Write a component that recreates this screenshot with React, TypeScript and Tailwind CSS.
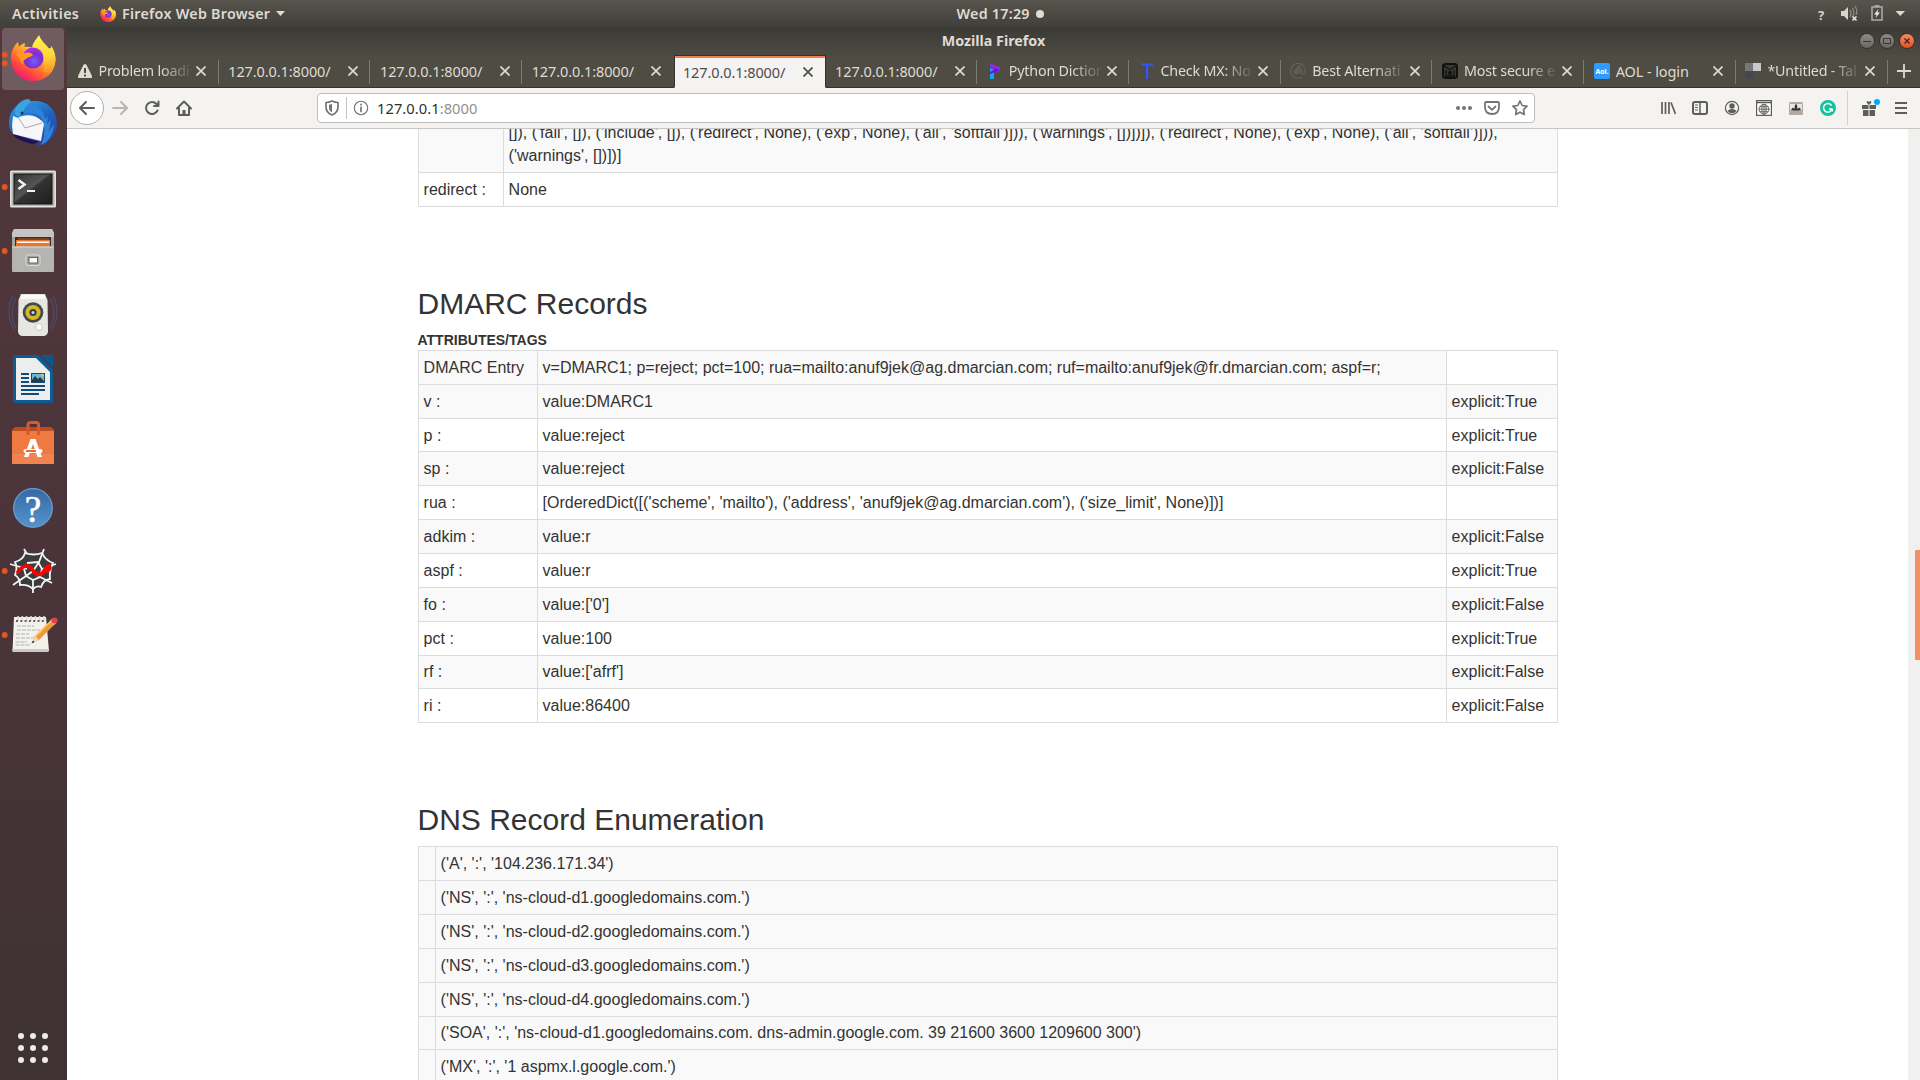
import React from "react";

const ui = "font-['Noto_Sans',sans-serif]";

function FirefoxLogo({ id }: { id: string }) {
  return (
    <>
      <defs>
        <linearGradient id={id + "a"} x1="0.85" y1="0.1" x2="0.2" y2="0.95">
          <stop offset="0" stopColor="#fff44f" />
          <stop offset="0.3" stopColor="#ffc130" />
          <stop offset="0.55" stopColor="#ff7a2a" />
          <stop offset="0.8" stopColor="#ff3b47" />
          <stop offset="1" stopColor="#f0128a" />
        </linearGradient>
        <radialGradient id={id + "b"} cx="0.55" cy="0.65" r="0.6">
          <stop offset="0" stopColor="#7b5cf5" />
          <stop offset="0.6" stopColor="#7a2fd0" />
          <stop offset="1" stopColor="#a733e0" />
        </radialGradient>
        <linearGradient id={id + "c"} x1="0.5" y1="0" x2="0.6" y2="1">
          <stop offset="0" stopColor="#fff44f" />
          <stop offset="0.6" stopColor="#ffd43a" />
          <stop offset="1" stopColor="#ff8f25" />
        </linearGradient>
      </defs>
      <path
        d="M11 57C11 51 14 46 17 43L18 42L19 47C20 45 22 44 25 43L24.500 47C28 46 32 47 36 50L52 48C55 52 55.500 56 55.500 60C55 72 46 81 33.500 81C20 81 11 71 11 57Z"
        fill={"url(#" + id + "a)"}
      />
      <path
        d="M32 49C32 43 36 40 39 35C41 40 44 43 47 46L50 50L51.500 46C55 52 56 58 55 63C53 70 49 73 43 72C46 66 44 56 39 51Z"
        fill={"url(#" + id + "c)"}
      />
      <circle cx="33" cy="58" r="10.500" fill={"url(#" + id + "b)"} />
      <path
        d="M16 54C20 52 24 54 26 53C29 52 32 53 33 55C31 57 28 57 26 59C23 60 23 62 24 65C20 63 20 57 16 54Z"
        fill="#ff9a1f"
      />
    </>
  );
}

function DockIcon({ y, running = 0, active = false, children }: { y: number; running?: number; active?: boolean; children: React.ReactNode }) {
  return (
    <svg className="block h-16 w-[67px] shrink-0" viewBox={"0 " + (y - 32) + " 67 64"}>
      {active && <rect x="2" y={y - 31} width="62" height="62" rx="4" fill="#705c60" />}
      {running === 1 && <circle cx="4.700" cy={y} r="2.900" fill="#e95420" />}
      {running === 2 && (
        <>
          <circle cx="4.700" cy={y - 4.3} r="2.900" fill="#e95420" />
          <circle cx="4.700" cy={y + 4.3} r="2.900" fill="#e95420" />
        </>
      )}
      {children}
    </svg>
  );
}

function Dock() {
  return (
    <aside className="flex w-[67px] shrink-0 flex-col justify-between bg-linear-to-b from-[#52383c] via-[#4a343a] to-[#3e3233]">
      <div className="flex flex-col">
        <DockIcon y={59} running={2} active>
          <FirefoxLogo id="dock" />
        </DockIcon>
        <DockIcon y={123}>
          <defs>
            <linearGradient id="tb" x1="0.2" y1="0" x2="0.7" y2="1">
              <stop offset="0" stopColor="#2a9be6" />
              <stop offset="0.5" stopColor="#1d62c0" />
              <stop offset="1" stopColor="#2f3f9b" />
            </linearGradient>
          </defs>
          <path d="M9 124C9 108 20 100 35 101C49 101 57 111 57 124C56 134 52 142 40 146L37 145L39 142L14 135C11 132 9 129 9 124Z" fill="url(#tb)" />
          <path d="M12 133L22 137L39 142L33 144C23 142 15 139 12 133Z" fill="#23104f" />
          <path d="M28 105C37 105 44 110 45 119L48 116L47 124L51 120L49 131L54 124C53 136 48 142 41 145C45 137 46 125 41 118C37 113 31 112 25 113Z" fill="#2f83d6" />
          <path d="M13 116L18 118C24 114 35 114 42 121L44 124L41 141L13 134L12 126Z" fill="#f6f6f8" />
          <path d="M18 117L25 128L42 123" fill="none" stroke="#a9abb2" strokeWidth="1" />
          <path d="M15 110C17 103 23 99 29 99L31 102C25 105 25 111 19 117C15 115 14 113 15 110Z" fill="#3aa3e0" />
          <circle cx="22" cy="113" r="1.500" fill="#173461" />
        </DockIcon>
        <DockIcon y={187} running={1}>
          <defs>
            <linearGradient id="tm" x1="0" y1="0" x2="1" y2="1">
              <stop offset="0" stopColor="#333" />
              <stop offset="0.45" stopColor="#555" />
              <stop offset="0.5" stopColor="#333" />
              <stop offset="1" stopColor="#1e1e1e" />
            </linearGradient>
          </defs>
          <rect x="10" y="170.500" width="46" height="37" rx="1.500" fill="#e2e2e0" />
          <rect x="11.500" y="172" width="43" height="34" fill="#b6b6b4" />
          <rect x="14" y="174" width="38" height="30" fill="url(#tm)" stroke="#111" />
          <path d="M18.500 180L24.500 184.500L18.500 189" fill="none" stroke="#f2f2f2" strokeWidth="2.600" />
          <path d="M27 191H35" stroke="#f2f2f2" strokeWidth="2" />
        </DockIcon>
        <DockIcon y={251} running={1}>
          <path d="M14 229H52L54 233V268H12V233Z" fill="#a5a5a2" />
          <path d="M14 229H52L54 233V237H12V233Z" fill="#c4c4c2" />
          <rect x="15" y="237" width="36" height="10" fill="#35302d" />
          <rect x="18" y="238" width="31" height="9" fill="#7b4424" />
          <rect x="16" y="240" width="34" height="7" fill="#e9752d" />
          <rect x="17" y="241.500" width="32" height="1.500" fill="#fff" />
          <rect x="12" y="246.500" width="42" height="25.500" rx="1" fill="#b4b4b2" />
          <path d="M12.500 247H53.500" stroke="#dadad8" />
          <rect x="26" y="255" width="14" height="10.500" rx="2" fill="#a2a2a0" stroke="#dededc" />
          <rect x="29" y="257.500" width="8.500" height="5.500" fill="#fafafa" stroke="#666" />
        </DockIcon>
        <DockIcon y={315}>
          <g fill="none" stroke="#4c5580" strokeWidth="1.200" opacity="0.700">
            <path d="M16 298C11 307 11 319 16 328M13 296C7 306 8 320 14 330M10.500 303C8.500 309 8.500 315 10.500 321M50 298C55 307 55 319 50 328M53 296C59 306 58 320 52 330M55.500 303C57.500 309 57.500 315 55.500 321" />
          </g>
          <path d="M21 294H45L47.500 300L48 331C48 334 46 336 43 336H23C20 336 18 334 18 331L18.500 300Z" fill="#e6e6e3" />
          <path d="M21 295H45V299H21Z" fill="#fafafa" />
          <circle cx="33" cy="312.500" r="10.300" fill="#45484a" />
          <circle cx="33" cy="312.500" r="7.600" fill="#d3b82a" />
          <circle cx="33" cy="312.500" r="3.600" fill="#3b3f44" />
          <circle cx="33" cy="312.500" r="1.500" fill="#cfd3d8" />
          <circle cx="39" cy="327" r="3.500" fill="#fafafa" stroke="#bbb" strokeWidth="0.700" />
        </DockIcon>
        <DockIcon y={379}>
          <path d="M13 357Q13 355 15 355H38L53 370V401Q53 403 51 403H15Q13 403 13 401Z" fill="#0e5c93" />
          <path d="M40 355H53V368Z" fill="#0b568d" />
          <path d="M16 358H36L50 372V400H16Z" fill="#eceeee" />
          <g fill="#0f4c78">
            <rect x="21" y="373" width="8" height="2" />
            <rect x="21" y="377" width="8" height="2" />
            <rect x="21" y="381" width="8" height="2" />
            <rect x="21" y="385" width="24" height="2" />
            <rect x="21" y="389" width="24" height="2" />
            <rect x="21" y="393" width="18" height="2" />
            <rect x="31" y="373" width="14" height="10" />
          </g>
          <rect x="32" y="374" width="12" height="8" fill="#6db7de" />
          <path d="M32 382V380L35 376L38 379L40 377L44 381V382Z" fill="#303a3c" />
          <circle cx="42.500" cy="375" r="1.500" fill="#f2c31b" />
        </DockIcon>
        <DockIcon y={443}>
          <path d="M12 430L15 427H51L54 430V464H12Z" fill="#bf4b20" />
          <rect x="12" y="431" width="42" height="33" fill="#ee7a42" />
          <rect x="12" y="454" width="42" height="10" fill="#f08350" />
          <path d="M28 435V425Q28 422.500 31 422.500H36Q38.500 422.500 38.500 425V435" fill="none" stroke="#d75a2b" strokeWidth="3" />
          <path d="M30.500 439H35.500L42 457H37.500L33 444L28.500 457H24Z" fill="#fff" />
          <rect x="23.500" y="449" width="19" height="4" rx="2" fill="#fff" />
          <rect x="26" y="450" width="10" height="2" fill="#ee6a2f" />
        </DockIcon>
        <DockIcon y={507}>
          <defs>
            <linearGradient id="hp" x1="0" y1="0" x2="0" y2="1">
              <stop offset="0" stopColor="#3568a4" />
              <stop offset="1" stopColor="#5495cc" />
            </linearGradient>
          </defs>
          <circle cx="33" cy="508" r="19.300" fill="url(#hp)" stroke="#6a9ccb" strokeWidth="1.300" />
          <text x="33" y="521.500" textAnchor="middle" fontSize="37" fill="#fff" fontFamily="'Liberation Serif', serif" stroke="#fff" strokeWidth="0.600">?</text>
        </DockIcon>
        <DockIcon y={571} running={1}>
          <path d="M25 552L42 552L53 563L51 578L44 586L33 590L20 584L14 575L15 561Z" fill="#3b3b3b" />
          <g fill="none" stroke="#f4f4f4" strokeWidth="1.800">
            <path d="M25 553Q34 556 42 553Q45 560 53 563Q49 571 50 579Q43 580 41 587Q37 585 33 589Q28 584 20 585Q20 578 15 575Q18 568 15 562Q23 560 25 553Z" />
            <path d="M24 549L27 554M44 549L39 562L33 571M10 564L27 569M56 564L42 569M13 585L26 576M52 583L40 577M33 580V593M33 571L40 577M33 571L26 576" />
            <path d="M27 563L38 562L42 569L40 577L33 580L26 576L24 569" />
          </g>
          <path d="M17 573C23 565 28 564 32 569C36 576 41 576 44 571C46 568 49 568 50 567" fill="none" stroke="#f00" strokeWidth="3.600" />
          <ellipse cx="47.500" cy="568.500" rx="4.500" ry="3.500" transform="rotate(-40 47.500 568.500)" fill="#f00" />
        </DockIcon>
        <DockIcon y={635} running={1}>
          <path d="M14 617H46L49 651H12.500Z" fill="#f1f1ee" />
          <path d="M12.500 649H48.500V652H12.500Z" fill="#c9c9c5" />
          <g fill="none" stroke="#d9d9d6" strokeWidth="1.600">
            <path d="M18 621V616M22.300 621V616M26.600 621V616M31 621V616M35.300 621V616M39.600 621V616M44 621V616" />
          </g>
          <path d="M16 621H46" stroke="#3a3333" strokeWidth="1.500" strokeDasharray="2 2.300" />
          <path d="M17 626H34M17 630H40M16 634H29M16 638H34M15.500 642H27M15.500 645H30" stroke="#b3b3b0" strokeWidth="1.200" strokeDasharray="4 1" />
          <path d="M32 643L35 636L51 620L55 624L39 640Z" fill="#f09a35" />
          <path d="M34 638L51 621" stroke="#ffc878" strokeWidth="1.300" />
          <path d="M31.500 643.500L35 636L39 640Z" fill="#ecd8b8" />
          <path d="M31.500 643.500L33 640.500L34.500 642Z" fill="#222" />
          <path d="M50 621L52 618.500L56.500 623L54 625Z" fill="#b9c0c6" />
          <circle cx="54.500" cy="620.500" r="3" fill="#e0444a" />
        </DockIcon>
      </div>
      <svg className="block h-16 w-[67px]" viewBox="0 1016 67 64">
        {[1036, 1048, 1060].map((y) => [21, 33, 45].map((x) => <circle key={x + "-" + y} cx={x} cy={y} r="3" fill="#eeecea" />))}
      </svg>
    </aside>
  );
}

function TopBar() {
  return (
    <header className={"grid h-[27px] shrink-0 grid-cols-[1fr_auto_1fr] items-center bg-linear-to-b from-[#58554d] to-[#403f3a] text-[14px] text-[#dfdbd2] " + ui}>
      <div className="flex h-full items-center">
        <span className="ml-3 w-[68px] text-[14.300px] font-semibold tracking-[0.350px]">Activities</span>
        <svg className="ml-5 size-4" viewBox="10 35 46 46">
          <FirefoxLogo id="top" />
        </svg>
        <span className="ml-[6px] w-[149px] text-[14.300px] font-semibold whitespace-nowrap tracking-[0.260px]">Firefox Web Browser</span>
        <svg className="ml-[5px] h-[5px] w-[9px]" viewBox="0 0 9 5">
          <path d="M0 0H9L4.500 5Z" fill="#dfdbd2" />
        </svg>
      </div>
      <div className="flex items-center gap-1 pl-20 whitespace-nowrap">
        <span className="w-[75px] text-[14.300px] font-semibold tracking-[0.250px]">Wed 17:29</span>
        <span className="size-2 rounded-full bg-[#dfdbd2]" />
      </div>
      <svg className="h-[27px] w-[120px] justify-self-end" viewBox="1800 0 120 27">
        <text x="1821" y="19.500" textAnchor="middle" fontSize="13" fontWeight="bold" fill="#d8d5cd" fontFamily="'Noto Sans', sans-serif">?</text>
        <path d="M1841 11H1844L1848 7V20L1844 16H1841Z" fill="#d8d5cd" />
        <path d="M1850 10Q1852 13 1850 17M1852.500 8Q1855 13 1852.500 17M1855 6Q1858 11 1856 15" fill="none" stroke="#8b8981" strokeWidth="1.400" />
        <path d="M1852.500 16.500L1856.500 20.500M1856.500 16.500L1852.500 20.500" stroke="#e8e6e0" strokeWidth="1.700" />
        <rect x="1872" y="7" width="10" height="13" fill="none" stroke="#a9a79f" strokeWidth="1.600" />
        <rect x="1874.500" y="5" width="5" height="2" fill="#a9a79f" />
        <path d="M1878.500 9L1874 14.500H1876.500L1875.500 18L1880 12.500H1877.500Z" fill="#e8e6e0" />
        <path d="M1895.500 11H1905L1900.250 16Z" fill="#dfdbd2" />
      </svg>
    </header>
  );
}

function TitleBar() {
  return (
    <div className={"grid h-[28px] shrink-0 grid-cols-[1fr_auto_1fr] items-center bg-linear-to-b from-[#3b3a36] to-[#4d4a43] text-[#dfdbd2] " + ui}>
      <span />
      <span className="text-[14.300px] font-bold tracking-[-0.020px]">Mozilla Firefox</span>
      <div className="flex items-center justify-end gap-1 pr-[5px]">
        <span className="flex size-4 items-center justify-center rounded-full border border-[#35342f] bg-linear-to-b from-[#8d8b84] to-[#686660]">
          <span className="h-px w-2 bg-[#3b3a36]" />
        </span>
        <span className="flex size-4 items-center justify-center rounded-full border border-[#35342f] bg-linear-to-b from-[#8d8b84] to-[#686660]">
          <span className="h-[6px] w-2 border border-[#3b3a36]" />
        </span>
        <span className="flex size-4 items-center justify-center rounded-full border border-[#4d2b20] bg-linear-to-b from-[#f28b67] to-[#e2501f]">
          <svg className="size-[6px]" viewBox="0 0 6 6">
            <path d="M0.500 0.500L5.500 5.500M5.500 0.500L0.500 5.500" stroke="#43261b" strokeWidth="1.300" />
          </svg>
        </span>
      </div>
    </div>
  );
}

type TabInfo = { title: string; icon?: React.ReactNode; active?: boolean; fade?: boolean };

const tabs: TabInfo[] = [
  {
    title: "Problem loading",
    fade: true,
    icon: (
      <>
        <path d="M8 1Q9 1 9.600 2L15 13Q15.500 15 14 15H2Q0.500 15 1 13L6.400 2Q7 1 8 1Z" fill="#dfdbd2" />
        <path d="M8 5V10M8 11.500V13.500" stroke="#4f4c44" strokeWidth="2" />
      </>
    ),
  },
  { title: "127.0.0.1:8000/" },
  { title: "127.0.0.1:8000/" },
  { title: "127.0.0.1:8000/" },
  { title: "127.0.0.1:8000/", active: true },
  { title: "127.0.0.1:8000/" },
  {
    title: "Python Diction",
    fade: true,
    icon: (
      <>
        <path d="M3 0L13 4.500V8L9 9.500L3 3Z" fill="#8a2be8" />
        <path d="M13 7L3 12V8.500L8 5.500Z" fill="#6a0fdc" />
        <path d="M3 5L7 7L3 9ZM3 11L7 9.500V16H3Z" fill="#12a5f4" />
      </>
    ),
  },
  { title: "Check MX: No", fade: true, icon: <path d="M2 0.500H14V2.500H9.200V16H6.800V2.500H2Z" fill="#3355ff" /> },
  {
    title: "Best Alternati",
    fade: true,
    icon: (
      <g fill="none" stroke="#65645f" strokeWidth="1.100">
        <path d="M12 14A7.400 7.400 0 1 1 15.400 8C15 11 12 12 11 9.500" />
        <path d="M4 9L9 3L12 8L6 11ZM5 8L9 5M5 10L10 7" />
      </g>
    ),
  },
  {
    title: "Most secure e",
    fade: true,
    icon: (
      <>
        <rect x="1" y="1" width="14" height="14" rx="2.500" fill="#3b3933" stroke="#111" strokeWidth="2" />
        <path d="M2 3L8 6.500L14 3M4 7V13H12V7" fill="none" stroke="#111" strokeWidth="1.300" />
        <circle cx="8" cy="10" r="2" fill="#111" />
      </>
    ),
  },
  {
    title: "AOL - login",
    icon: (
      <>
        <rect width="16" height="16" rx="2" fill="#2f9bff" />
        <text x="8" y="10.500" textAnchor="middle" fontSize="7" fontWeight="bold" fill="#fff" fontFamily="'Noto Sans', sans-serif" textLength="13">Aol.</text>
      </>
    ),
  },
  {
    title: "*Untitled - Tal",
    fade: true,
    icon: (
      <>
        <rect width="8" height="8" fill="#77777a" />
        <rect x="8" width="8" height="8" fill="#c9c9cb" />
        <rect y="8" width="8" height="8" fill="#45474b" />
      </>
    ),
  },
];

function Tab({ tab }: { tab: TabInfo }) {
  const shell = tab.active
    ? "border-x border-t border-b border-x-[#33322e] border-t-[#33322e] border-b-[#f4f3f2] bg-[#f4f3f2] text-[#4c4c4c] shadow-[inset_0_2px_0_#f27f52] pl-[8px] pr-3"
    : "border-b border-[#33322e] bg-[#4f4c44] text-[#dfdbd2] pl-[9.500px] pr-[12.500px]";
  return (
    <div className={"relative flex h-[33px] w-[151.730px] shrink-0 items-center " + shell}>
      {tab.icon && (
        <svg className="mr-[6px] size-4 shrink-0" viewBox="0 0 16 16">
          {tab.icon}
        </svg>
      )}
      <span
        className={
          "min-w-0 flex-1 overflow-hidden leading-[22px] whitespace-nowrap " +
          (tab.fade ? "text-[14.300px] tracking-[-0.200px] mask-[linear-gradient(to_right,black_68%,rgba(0,0,0,0.1))]" : "text-[14.500px] tracking-[-0.1px]")
        }
      >
        {tab.title}
      </span>
      <svg className="ml-[6px] size-[10px] shrink-0" viewBox="0 0 10 10">
        <path d="M0.500 0.500L9.500 9.500M9.500 0.500L0.500 9.500" stroke="currentColor" strokeWidth="1.700" />
      </svg>
    </div>
  );
}

function TabStrip() {
  return (
    <div className={"flex h-[33px] shrink-0 items-center bg-[#4f4c44] " + ui}>
      {tabs.map((tab, i) => (
        <div key={i} className="relative">
          <Tab tab={tab} />
          {i !== 3 && i !== 4 && <span className="absolute top-[5px] right-0 h-6 w-px bg-[#7d7a72]" />}
        </div>
      ))}
      <div className="flex h-full flex-1 items-center justify-center border-b border-[#33322e]">
        <svg className="size-[14px]" viewBox="0 0 14 14">
          <path d="M7 0V14M0 7H14" stroke="#dfdbd2" strokeWidth="1.800" />
        </svg>
      </div>
    </div>
  );
}

function Glyph({ children, className = "size-4" }: { children: React.ReactNode; className?: string }) {
  return (
    <svg className={"block shrink-0 " + className} viewBox="0 0 16 16" fill="none" stroke="#5d5d5b" strokeWidth="2" strokeLinecap="round" strokeLinejoin="round">
      {children}
    </svg>
  );
}

function Toolbar() {
  return (
    <div className={"flex h-[41px] shrink-0 items-center border-b border-[#c8c6c3] bg-[#f4f3f2] " + ui}>
      <div className="ml-[3px] flex size-[34px] items-center justify-center rounded-full border border-[#b1b0ae] bg-white">
        <Glyph>
          <path d="M15 8H1.500M7 2L1 8L7 14" />
        </Glyph>
      </div>
      <Glyph className="ml-2 size-4 opacity-40">
        <path d="M1 8H14.500M9 2L15 8L9 14" />
      </Glyph>
      <Glyph className="ml-4 size-4">
        <path d="M13.500 10.500A6 6 0 1 1 12.500 4" />
        <path d="M15 1.500V6.500H10Z" fill="#5d5d5b" stroke="none" />
        <path d="M14.500 1.500V6H10" />
      </Glyph>
      <Glyph className="ml-4 size-4">
        <path d="M1 8.500L8 1.500L15 8.500" />
        <path d="M3 8V15H13V8" />
        <path d="M8 15V10" strokeWidth="3" strokeLinecap="butt" />
      </Glyph>
      <div className="ml-[125px] flex h-[30px] w-[1218px] items-center rounded-[4px] border border-[#c0bebb] bg-white">
        <Glyph className="ml-[6px] size-4">
          <path d="M8 1Q11 2.500 14 2.500V7Q14 12.500 8 15Q2 12.500 2 7V2.500Q5 2.500 8 1Z" stroke="#737373" strokeWidth="1.700" />
          <path d="M8 4V12.500Q5 11 5 7V4.800Z" fill="#737373" stroke="none" />
        </Glyph>
        <span className="ml-[6px] h-[22px] w-px bg-[#c4c4c4]" />
        <Glyph className="ml-[6px] size-4">
          <circle cx="8" cy="8" r="6.700" stroke="#737373" strokeWidth="1.100" />
          <path d="M8 7.300V11.500M8 4.300V4.800" stroke="#737373" strokeWidth="1.700" />
        </Glyph>
        <span className="ml-2 text-[14.700px] leading-[22px] tracking-[0.050px] text-[#303030]">
          127.0.0.1<span className="text-[#8f8f8f]">:8000</span>
        </span>
        <div className="ml-auto flex items-center gap-3 pr-[6px]">
          <Glyph>
            <g fill="#737373" stroke="none">
              <circle cx="2" cy="8" r="2" />
              <circle cx="8" cy="8" r="2" />
              <circle cx="14" cy="8" r="2" />
            </g>
          </Glyph>
          <Glyph>
            <path d="M2 2H14Q15 2 15 3V7Q15 14 8 14Q1 14 1 7V3Q1 2 2 2ZM4.500 6.500L8 9.800L11.500 6.500" stroke="#737373" strokeWidth="1.800" />
          </Glyph>
          <Glyph>
            <path d="M8 1L10.200 5.500L15 6.200L11.500 9.600L12.300 14.500L8 12.200L3.700 14.500L4.500 9.600L1 6.200L5.800 5.500Z" stroke="#737373" strokeWidth="1.700" />
          </Glyph>
        </div>
      </div>
      <div className="ml-auto flex items-center gap-4">
        <Glyph>
          <path d="M2 2V14M5.500 2V14M9 2V14M11 2.500L15.500 14" strokeWidth="1.700" strokeLinecap="butt" />
        </Glyph>
        <Glyph>
          <rect x="1" y="2" width="14" height="12" rx="2" />
          <path d="M8 2V14" strokeWidth="1.500" />
          <path d="M3.500 5H5.500M3.500 7.500H5.500M3.500 10H5.500" strokeWidth="1" />
        </Glyph>
        <Glyph>
          <circle cx="8" cy="8" r="6.600" strokeWidth="1.200" />
          <circle cx="8" cy="6" r="2.700" fill="#5d5d5b" stroke="none" />
          <path d="M3.500 11Q5 9 8 9Q11 9 12.500 11Q11 13.300 8 13.300Q5 13.300 3.500 11Z" fill="#5d5d5b" stroke="none" />
        </Glyph>
        <Glyph>
          <rect x="0.600" y="0.600" width="14.800" height="14.800" fill="#fff" strokeWidth="1.200" strokeLinejoin="miter" />
          <path d="M1 2.500H15" strokeWidth="1.500" />
          <g strokeWidth="0.900">
            <circle cx="8" cy="9.200" r="4.900" />
            <ellipse cx="8" cy="9.200" rx="2.200" ry="4.900" />
            <path d="M3 9.200H13M4 6.700H12M4 11.700H12M8 4.500V14" />
          </g>
        </Glyph>
        <Glyph>
          <rect x="1" y="2" width="14" height="13" rx="1.500" fill="#b3a9a3" stroke="none" />
          <rect x="2" y="4" width="12" height="6" fill="#e9e5e2" stroke="none" />
          <path d="M3 9.500L5 7.500L6.500 9L7 4.500H9L9.500 9L11.500 7.500L13 9.500L11 10.500H5Z" fill="#333" stroke="none" />
        </Glyph>
        <Glyph>
          <circle cx="8" cy="8" r="8" fill="#15c39a" stroke="none" />
          <path d="M11.500 5.500A4.300 4.300 0 1 0 12 9H9M12.300 9V11.500" stroke="#fff" strokeWidth="1.500" strokeLinecap="butt" />
        </Glyph>
      </div>
      <span className="ml-[11px] h-[34px] w-px bg-[#d3d1cf]" />
      <svg className="ml-[14px] h-[18px] w-[19px] shrink-0" viewBox="0 0 19 18">
        <path d="M0 6H6.500V10H0ZM7.500 6H14V10H7.500ZM1 11H6.500V17H1ZM7.500 11H13V17H7.500ZM4.500 3Q5.500 1 7 3Q8.500 1 9.500 3L8 5.500H6Z" fill="#5d5d5b" />
        <circle cx="15" cy="3" r="3" fill="#00a8ff" />
      </svg>
      <svg className="mr-[13px] ml-[14px] h-3 w-3 shrink-0" viewBox="0 0 12 12">
        <path d="M0 1H12M0 6H12M0 11H12" stroke="#5d5d5b" strokeWidth="2" />
      </svg>
    </div>
  );
}

const cell = "shrink-0 border-r border-b border-[#dcdcdc] pl-[4.600px] whitespace-nowrap";

const dmarc: [string, string, string][] = [
  ["DMARC Entry", "v=DMARC1; p=reject; pct=100; rua=mailto:anuf9jek@ag.dmarcian.com; ruf=mailto:anuf9jek@fr.dmarcian.com; aspf=r;", ""],
  ["v :", "value:DMARC1", "explicit:True"],
  ["p :", "value:reject", "explicit:True"],
  ["sp :", "value:reject", "explicit:False"],
  ["rua :", "[OrderedDict([('scheme', 'mailto'), ('address', 'anuf9jek@ag.dmarcian.com'), ('size_limit', None)])]", ""],
  ["adkim :", "value:r", "explicit:False"],
  ["aspf :", "value:r", "explicit:True"],
  ["fo :", "value:['0']", "explicit:False"],
  ["pct :", "value:100", "explicit:True"],
  ["rf :", "value:['afrf']", "explicit:False"],
  ["ri :", "value:86400", "explicit:False"],
];

const dns = [
  "('A', ':', '104.236.171.34')",
  "('NS', ':', 'ns-cloud-d1.googledomains.com.')",
  "('NS', ':', 'ns-cloud-d2.googledomains.com.')",
  "('NS', ':', 'ns-cloud-d3.googledomains.com.')",
  "('NS', ':', 'ns-cloud-d4.googledomains.com.')",
  "('SOA', ':', 'ns-cloud-d1.googledomains.com. dns-admin.google.com. 39 21600 3600 1209600 300')",
  "('MX', ':', '1 aspmx.l.google.com.')",
];

function Page() {
  return (
    <main className="ml-[351px] w-[1140px] shrink-0 text-[16px] leading-[23px] text-[#333333] font-['Liberation_Sans',Arial,sans-serif]">
      <div className="border-l border-[#dcdcdc]">
        <div className="flex h-11 bg-[#f9f9f9]">
          <div className={cell + " w-[85px]"} />
          <div className="flex w-[1054px] flex-col justify-end overflow-hidden border-r border-b border-[#dcdcdc] pb-[5px] pl-[4.600px] whitespace-nowrap">
            <div>[]), ('fail', []), ('include', []), ('redirect', None), ('exp', None), ('all', 'softfail')])), ('warnings', [])])]), ('redirect', None), ('exp', None), ('all', 'softfail')])),</div>
            <div>('warnings', [])])]</div>
          </div>
        </div>
        <div className="flex h-[34px]">
          <div className={cell + " w-[85px] pt-[5px]"}>redirect :</div>
          <div className={cell + " w-[1054px] pt-[5px]"}>None</div>
        </div>
      </div>

      <h2 className="mt-20 -ml-[0.500px] text-[30px] leading-[33px]">DMARC Records</h2>
      <div className="mt-[10px] -ml-[0.500px] text-[14px] leading-5 font-bold">ATTRIBUTES/TAGS</div>
      <div className="border-t border-l border-[#dcdcdc]">
        {dmarc.map(([name, value, explicit], i) => {
          const shade = i === 0 || i % 2 === 1 ? " bg-[#f9f9f9]" : "";
          const pad = i === 9 ? " pt-1" : " pt-[5px]";
          return (
            <div key={i} className={"flex " + (i === 2 || i === 9 ? "h-[33px]" : "h-[34px]")}>
              <div className={cell + " w-[119px]" + pad + shade}>{name}</div>
              <div className={cell + " w-[909px]" + pad + shade}>{value}</div>
              <div className={cell + " w-[111px]" + pad + (explicit ? shade : "")}>{explicit}</div>
            </div>
          );
        })}
      </div>

      <h2 className="mt-20 -ml-[0.500px] text-[30px] leading-[33px]">DNS Record Enumeration</h2>
      <div className="mt-[10px] border-t border-l border-[#dcdcdc] bg-[#f9f9f9]">
        {dns.map((record, i) => (
          <div key={i} className={"flex " + (i === 5 ? "h-[33px]" : "h-[34px]")}>
            <div className={cell + " w-[17px]"} />
            <div className={cell + " w-[1122px]" + (i === 5 ? " pt-1" : " pt-[5px]")}>{record}</div>
          </div>
        ))}
      </div>
    </main>
  );
}

export default function App() {
  return (
    <div className="flex h-[1080px] w-[1920px] flex-col overflow-hidden bg-white">
      <TopBar />
      <div className="flex min-h-0 flex-1">
        <Dock />
        <div className="flex min-w-0 flex-1 flex-col">
          <TitleBar />
          <TabStrip />
          <Toolbar />
          <div className="flex min-h-0 flex-1 overflow-hidden">
            <Page />
            <div className="ml-auto flex w-3 justify-end bg-[#f1f0ef] pt-[421px]">
              <div className="h-[110px] w-[5px] rounded-l-[1px] bg-[#f29068]" />
            </div>
          </div>
        </div>
      </div>
    </div>
  );
}
